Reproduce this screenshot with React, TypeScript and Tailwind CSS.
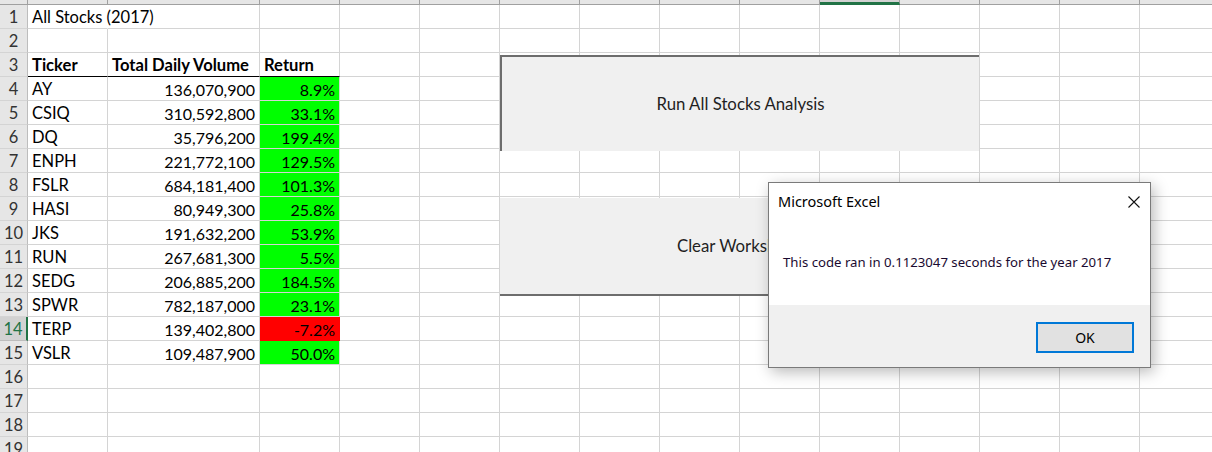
import clsx from "clsx";

const rows: { ticker: string; volume: string; ret: string; neg?: boolean }[] = [
  { ticker: "AY", volume: "136,070,900", ret: "8.9%" },
  { ticker: "CSIQ", volume: "310,592,800", ret: "33.1%" },
  { ticker: "DQ", volume: "35,796,200", ret: "199.4%" },
  { ticker: "ENPH", volume: "221,772,100", ret: "129.5%" },
  { ticker: "FSLR", volume: "684,181,400", ret: "101.3%" },
  { ticker: "HASI", volume: "80,949,300", ret: "25.8%" },
  { ticker: "JKS", volume: "191,632,200", ret: "53.9%" },
  { ticker: "RUN", volume: "267,681,300", ret: "5.5%" },
  { ticker: "SEDG", volume: "206,885,200", ret: "184.5%" },
  { ticker: "SPWR", volume: "782,187,000", ret: "23.1%" },
  { ticker: "TERP", volume: "139,402,800", ret: "-7.2%", neg: true },
  { ticker: "VSLR", volume: "109,487,900", ret: "50.0%" },
];

// columns D onwards
const extraCols = Array.from({ length: 12 }, (_, i) => i);

function Cell({ children, className }: { children?: React.ReactNode; className?: string }) {
  return (
    <div
      className={clsx(
        "h-[24px] border-r border-b border-[#d4d4d4] flex items-center pt-[2px] px-[4px] whitespace-nowrap",
        className
      )}
    >
      {children}
    </div>
  );
}

function RowHead({ n }: { n: number }) {
  const active = n === 14;
  return (
    <div
      className={clsx(
        "h-[24px] border-b flex items-center justify-center pt-[1px] text-[16.5px] overflow-hidden",
        active
          ? "bg-[#d2d2d2] text-[#217346] border-r-2 border-r-[#217346] border-b-[#bdbdbd]"
          : "bg-[#e6e6e6] text-[#333333] border-r border-r-[#bdbdbd] border-b-[#d4d4d4]"
      )}
    >
      {n}
    </div>
  );
}

function EmptyTail() {
  return (
    <>
      {extraCols.map((c) => (
        <Cell key={c} />
      ))}
    </>
  );
}

export default function App() {
  return (
    <div className="relative w-[1212px] h-[452px] overflow-hidden bg-white font-['Lato',sans-serif] text-[16px] text-black">
      <div className="grid grid-cols-[28px_80px_152px_80px_repeat(12,80px)]">
        {/* column header strip, cut off at the top */}
        <div className="h-[5px] bg-[#e6e6e6] border-r border-b border-[#a0a0a0]" />
        <div className="h-[5px] bg-[#e6e6e6] border-r border-b border-[#a0a0a0]" />
        <div className="h-[5px] bg-[#e6e6e6] border-r border-b border-[#a0a0a0]" />
        <div className="h-[5px] bg-[#e6e6e6] border-r border-b border-[#a0a0a0]" />
        {extraCols.map((c) => (
          <div
            key={c}
            className={clsx(
              "h-[5px] border-r border-[#a0a0a0]",
              c === 6
                ? "bg-[#d2d2d2] border-b-[3px] border-b-[#217346]"
                : "bg-[#e6e6e6] border-b"
            )}
          />
        ))}

        {/* row 1 */}
        <RowHead n={1} />
        <Cell className="border-r-transparent text-[16.5px]">All Stocks (2017)</Cell>
        <Cell />
        <Cell />
        <EmptyTail />

        {/* row 2 */}
        <RowHead n={2} />
        <Cell />
        <Cell />
        <Cell />
        <EmptyTail />

        {/* row 3 */}
        <RowHead n={3} />
        <Cell className="font-bold text-[16.6px] border-b-black">Ticker</Cell>
        <Cell className="font-bold text-[16.6px] border-b-black">Total Daily Volume</Cell>
        <Cell className="font-bold text-[16.6px] border-b-black">Return</Cell>
        <EmptyTail />

        {rows.map((r, i) => (
          <div key={r.ticker} className="contents">
            <RowHead n={i + 4} />
            <Cell className="text-[16.5px]">{r.ticker}</Cell>
            <Cell className="justify-end">{r.volume}</Cell>
            <Cell
              className={clsx(
                "justify-end",
                r.neg ? "bg-[#ff0000] border-[#ff0000]" : "bg-[#00ff00] border-[#00ff00]"
              )}
            >
              {r.ret}
            </Cell>
            <EmptyTail />
          </div>
        ))}

        {[16, 17, 18, 19].map((n) => (
          <div key={n} className="contents">
            <RowHead n={n} />
            <Cell />
            <Cell />
            <Cell />
            <EmptyTail />
          </div>
        ))}
      </div>

      {/* form buttons floating over the sheet */}
      <div className="absolute left-[500px] top-[55px] w-[479px] h-[96px] bg-[#f0f0f0] border-t-2 border-l-2 border-[#6d6d6d] flex items-center justify-center text-[16.8px] text-[#1f1f1f]">
        Run All Stocks Analysis
      </div>
      <div className="absolute left-[500px] top-[198px] w-[479px] h-[98px] bg-[#f0f0f0] border-b-2 border-r-2 border-[#6d6d6d] flex items-center justify-center text-[16.8px] text-[#1f1f1f]">
        Clear Worksheet
      </div>

      {/* message box */}
      <div className="absolute left-[768px] top-[182px] w-[383px] h-[186px] bg-white border border-[#7a7a7a] shadow-[3px_4px_14px_rgba(0,0,0,0.28)] flex flex-col font-['Noto_Sans',sans-serif]">
        <div className="h-[38px] flex items-center justify-between pl-[9px] pr-[8px]">
          <span className="text-[14.5px] text-black">Microsoft Excel</span>
          <svg width="12" height="12" viewBox="0 0 12 12" className="mr-[2px]">
            <path d="M0.5 0.5 L11.5 11.5 M11.5 0.5 L0.5 11.5" stroke="#111" strokeWidth="1.1" fill="none" />
          </svg>
        </div>
        <div className="flex-1 flex items-center pl-[14px] text-[13.2px] text-[#1a0a30]">
          This code ran in 0.1123047 seconds for the year 2017
        </div>
        <div className="h-[62px] bg-[#f0f0f0] flex justify-end items-start pt-[17px] pr-[16px]">
          <div className="w-[98px] h-[31px] border-2 border-[#0078d7] bg-[#e1e1e1] flex items-center justify-center text-[14px] text-black">
            OK
          </div>
        </div>
      </div>
    </div>
  );
}
